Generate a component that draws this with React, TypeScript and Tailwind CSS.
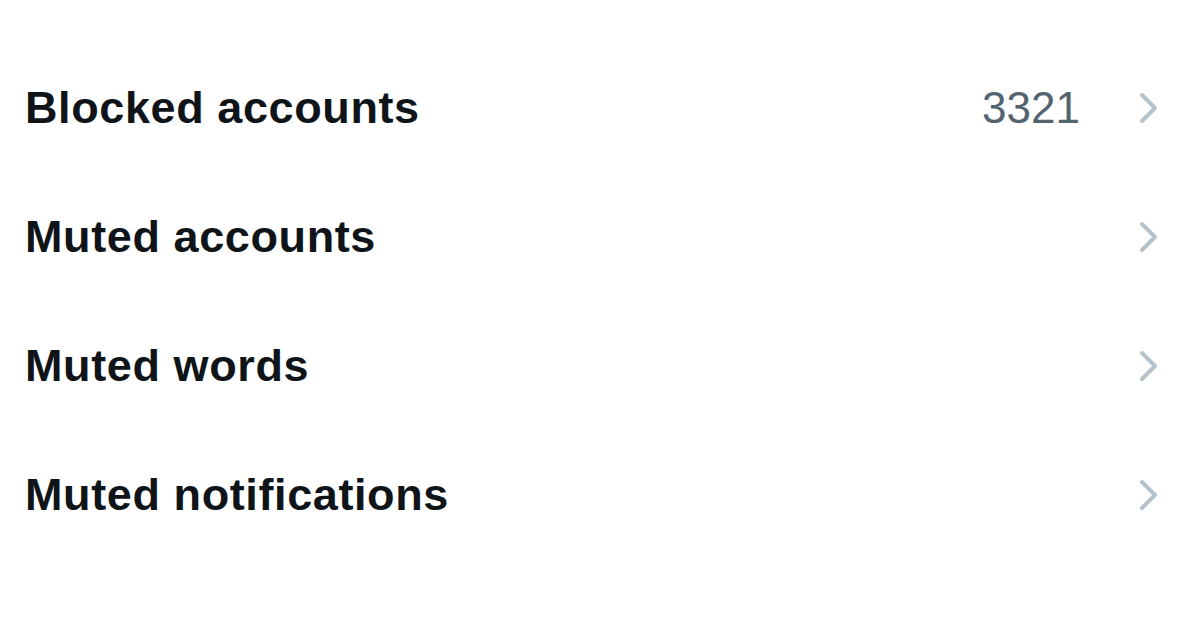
const rows = [
  { label: "Blocked accounts", count: "3321" },
  { label: "Muted accounts" },
  { label: "Muted words" },
  { label: "Muted notifications" },
];

function Chevron() {
  return (
    <svg width="20" height="32" viewBox="0 0 20 32" fill="none" className="shrink-0">
      <path
        d="M3 3 L16 16 L3 29"
        stroke="#b4c2cb"
        strokeWidth="4"
        strokeLinecap="round"
        strokeLinejoin="round"
      />
    </svg>
  );
}

export default function App() {
  return (
    <main
      className="min-h-screen bg-white pt-[43px]"
      style={{ fontFamily: '"Liberation Sans", Arial, sans-serif' }}
    >
      {rows.map((row) => (
        <div
          key={row.label}
          className="flex h-[129px] items-center justify-between pl-[25px] pr-[40px]"
        >
          <span className="text-[45px] font-bold leading-none tracking-[0.6px] text-[#0f1419]">
            {row.label}
          </span>
          <div className="flex items-center gap-[59px]">
            {row.count && (
              <span className="text-[44px] leading-none text-[#536471]">
                {row.count}
              </span>
            )}
            <Chevron />
          </div>
        </div>
      ))}
    </main>
  );
}
